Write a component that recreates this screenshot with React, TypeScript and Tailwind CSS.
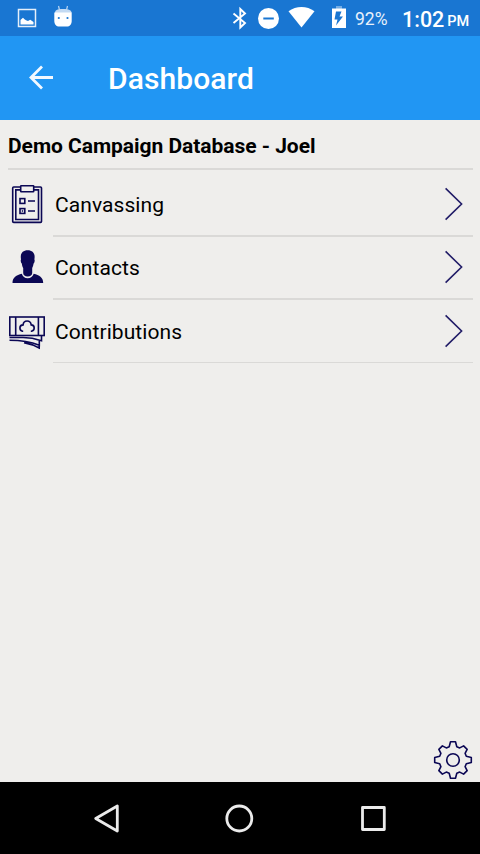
import type { ReactNode } from "react";

const GEAR_TEETH = Array.from({ length: 8 }, (_, i) => {
  const tip = i % 2 === 0 ? -18.3 : -17.5;
  const angle = (i * Math.PI) / 4;
  return [
    [-3.8, -13.3],
    [-2.5, tip],
    [2.5, tip],
    [3.8, -13.3],
  ]
    .map(([x, y]) => {
      const px = x * Math.cos(angle) - y * Math.sin(angle);
      const py = x * Math.sin(angle) + y * Math.cos(angle);
      return `${px.toFixed(2)},${py.toFixed(2)}`;
    })
    .join(" ");
}).join(" ");

const ClipboardIcon = () => (
  <svg className="w-[55px] h-12" viewBox="0 0 55 48" fill="none" stroke="#0b0754" strokeWidth="1.6">
    <rect x="12.7" y="7" width="28.8" height="35.4" rx="1" />
    <path d="M20.5 9.9H15.8v29.6h22.7V9.9H34" />
    <rect x="20.7" y="5.7" width="13" height="6" rx="0.5" fill="#efeeec" />
    <rect x="20" y="18.6" width="4.8" height="4.8" />
    <rect x="20" y="28.6" width="4.8" height="4.8" />
    <path d="M22 30.5l1 1M28 21h7M28 31h7" />
  </svg>
);

const PersonIcon = () => (
  <svg className="w-[55px] h-12" viewBox="0 0 55 48" fill="#0b0754">
    <path d="M27.7 7.2c-4.7 0-7.2 2.9-6.9 7.2l.2 2c-.6.6-.2 3.2.8 4 .3 2 .8 3.5 1.4 4.6v5c0 2 1.8 3.5 4.5 3.5s4.5-1.500 4.500-3.500v-5c.7-1.200 1.100-2.700 1.400-4.600 1-.8 1.400-3.400.8-4l.2-2c.3-4.300-2.200-7.200-6.900-7.200z" />
    <path d="M21.800 30.700c.7 2.700 3 4.500 5.900 4.500s5.200-1.800 6-4.500c5.500 1.200 9.500 3.600 9.500 9.300H12.500c0-5.700 4-8.100 9.300-9.300z" />
  </svg>
);

const MoneyIcon = () => (
  <svg className="w-[55px] h-12" viewBox="0 0 55 48" fill="none" stroke="#0b0754" strokeWidth="1.6">
    <rect x="9.8" y="10" width="34.4" height="18.5" />
    <path d="M15.7 10v18.500M38.400 10v18.500" />
    <path d="M23.200 24.300h-.6c-1.500-.3-2.700-1.600-2.700-3.200 0-1.900 1.400-3.100 3.200-3.200.2-2.300 1.800-3.900 4-3.900s3.800 1.600 4.100 3.900c1.700.1 3 1.400 3 3.200 0 1.600-1.200 2.900-2.800 3.200h-.6" />
    <path d="M9.500 30.500H23c7 0 13 1.300 18.500 3.200V29M9.500 33.300c12 0 21 1.500 29.800 5V34M24 35.600c5.500 1 10.500 2.900 15.200 5.400v-3" />
  </svg>
);

const Chevron = () => (
  <svg className="w-6 h-12 mr-[13px]" viewBox="0 0 24 48" fill="none" stroke="#211c67" strokeWidth="1.6">
    <path d="M2.600 8.400L18.600 24l-16 15.600" />
  </svg>
);

const MenuRow = ({
  icon,
  label,
  className,
}: {
  icon: ReactNode;
  label: string;
  className: string;
}) => (
  <div className={`flex items-start ${className}`}>
    {icon}
    <span className="flex-1 text-[21px] leading-[51px] tracking-[0.08px]">{label}</span>
    <Chevron />
  </div>
);

const StatusBar = () => (
  <div className="h-9 bg-[#1976d2] flex items-start text-white">
    <svg className="w-[350px] h-9 shrink-0" viewBox="0 0 350 36" fill="#fff">
      <rect x="18.5" y="9.5" width="17" height="17" fill="none" stroke="#e4effa" strokeWidth="1.5" />
      <path d="M20.500 24.500v-4.500l1-1 1.500-1.200 1.500 1.500 1.500.9 2 .8 2.200-1.200 1.500 1 1.800 1.200v2.500z" />
      {/* android head */}
      <path d="M58.500 6l1 4M67.500 6l-1 4" stroke="#b9d5f3" strokeWidth="1.2" />
      <path d="M55 13c0-3 2-4 8-4s8.500 1 8.500 4z" fill="#c3daf3" />
      <path d="M54.300 12.500h17.400v8c0 4-2 6-5 6h-7.400c-3 0-5-2-5-6z" />
      <circle cx="58.8" cy="18" r="1.100" fill="#1976d2" />
      <circle cx="67.5" cy="18" r="1.100" fill="#1976d2" />
      <path d="M233.500 13.500l11.500 9.500-4.700 4.500V9l4.700 4.500-11.500 9.500" fill="none" stroke="#fff" strokeWidth="1.9" />
      <circle cx="268.5" cy="18.5" r="10.5" />
      <path d="M263.300 18.500h10.500" stroke="#1976d2" strokeWidth="2" />
      <path d="M288.500 11.300c7.500-5.700 18.500-5.700 26 0l-13 16.200z" />
      <path d="M336 6h6v3h-6z" fill="#75ade4" />
      <path d="M332 8.500h14V28h-14z" />
      <path d="M341.500 11.500h-5.500l-1.500 8h3l-1.500 6 7-9h-3.500z" fill="#1976d2" />
    </svg>
    <span className="w-[52px] pl-[5px] text-[17.5px] leading-[38px] text-[#e8f1fb]">92%</span>
    <span className="text-[21.5px] font-medium leading-[39px] whitespace-nowrap">1:02</span>
    <span className="ml-[3px] text-[14.5px] font-medium leading-[43px]">PM</span>
  </div>
);

const NavBar = () => (
  <div className="h-[72px] bg-black flex">
    <svg className="w-[480px] h-[72px]" viewBox="0 0 480 72" fill="none" stroke="#ebebeb" strokeWidth="2.8" strokeLinejoin="round">
      <path d="M95.700 36.500L117.300 24v25z" />
      <circle cx="239.3" cy="36.5" r="12.5" />
      <rect x="362.5" y="25.5" width="21.8" height="22" />
    </svg>
  </div>
);

export default function App() {
  return (
    <div className="w-[480px] h-[854px] flex flex-col overflow-hidden bg-[#efeeec] text-black font-['Roboto',sans-serif]">
      <StatusBar />
      <header className="h-[84px] bg-[#2196f3] flex items-center text-white">
        <svg className="ml-7 w-[26px] h-[26px]" viewBox="0 0 26 26" fill="none" stroke="#f2f9ff" strokeWidth="2.8">
          <path d="M25 12.500H3M14 1.500l-11 11 11 11" />
        </svg>
        <h1 className="ml-[54px] pt-0.5 text-[30px] font-medium leading-none tracking-[0.08px]">Dashboard</h1>
      </header>
      <main className="flex-1">
        <h2 className="h-12 pl-2 text-[21px] font-bold leading-[52px] tracking-[-0.04px]">
          Demo Campaign Database - Joel
        </h2>
        <div className="h-0.5 ml-2 mr-[7px] bg-[#dad9d7]" />
        <MenuRow icon={<ClipboardIcon />} label="Canvassing" className="h-[65px] pt-2.5" />
        <div className="h-0.5 ml-[53px] mr-[7px] bg-[#dad9d7]" />
        <MenuRow icon={<PersonIcon />} label="Contacts" className="h-[61px] pt-1.5" />
        <div className="h-0.5 ml-[53px] mr-[7px] bg-[#dad9d7]" />
        <MenuRow icon={<MoneyIcon />} label="Contributions" className="h-[62px] pt-[7px]" />
        <div className="h-px ml-[53px] mr-[7px] bg-[#dad9d7]" />
      </main>
      <div className="flex justify-end pr-[7px] pb-0.5">
        <svg className="w-10 h-10" viewBox="-20 -20 40 40" fill="none" stroke="#0b0754" strokeWidth="1.6" strokeLinejoin="round">
          <polygon points={GEAR_TEETH} />
          <circle r="6.3" />
        </svg>
      </div>
      <NavBar />
    </div>
  );
}
